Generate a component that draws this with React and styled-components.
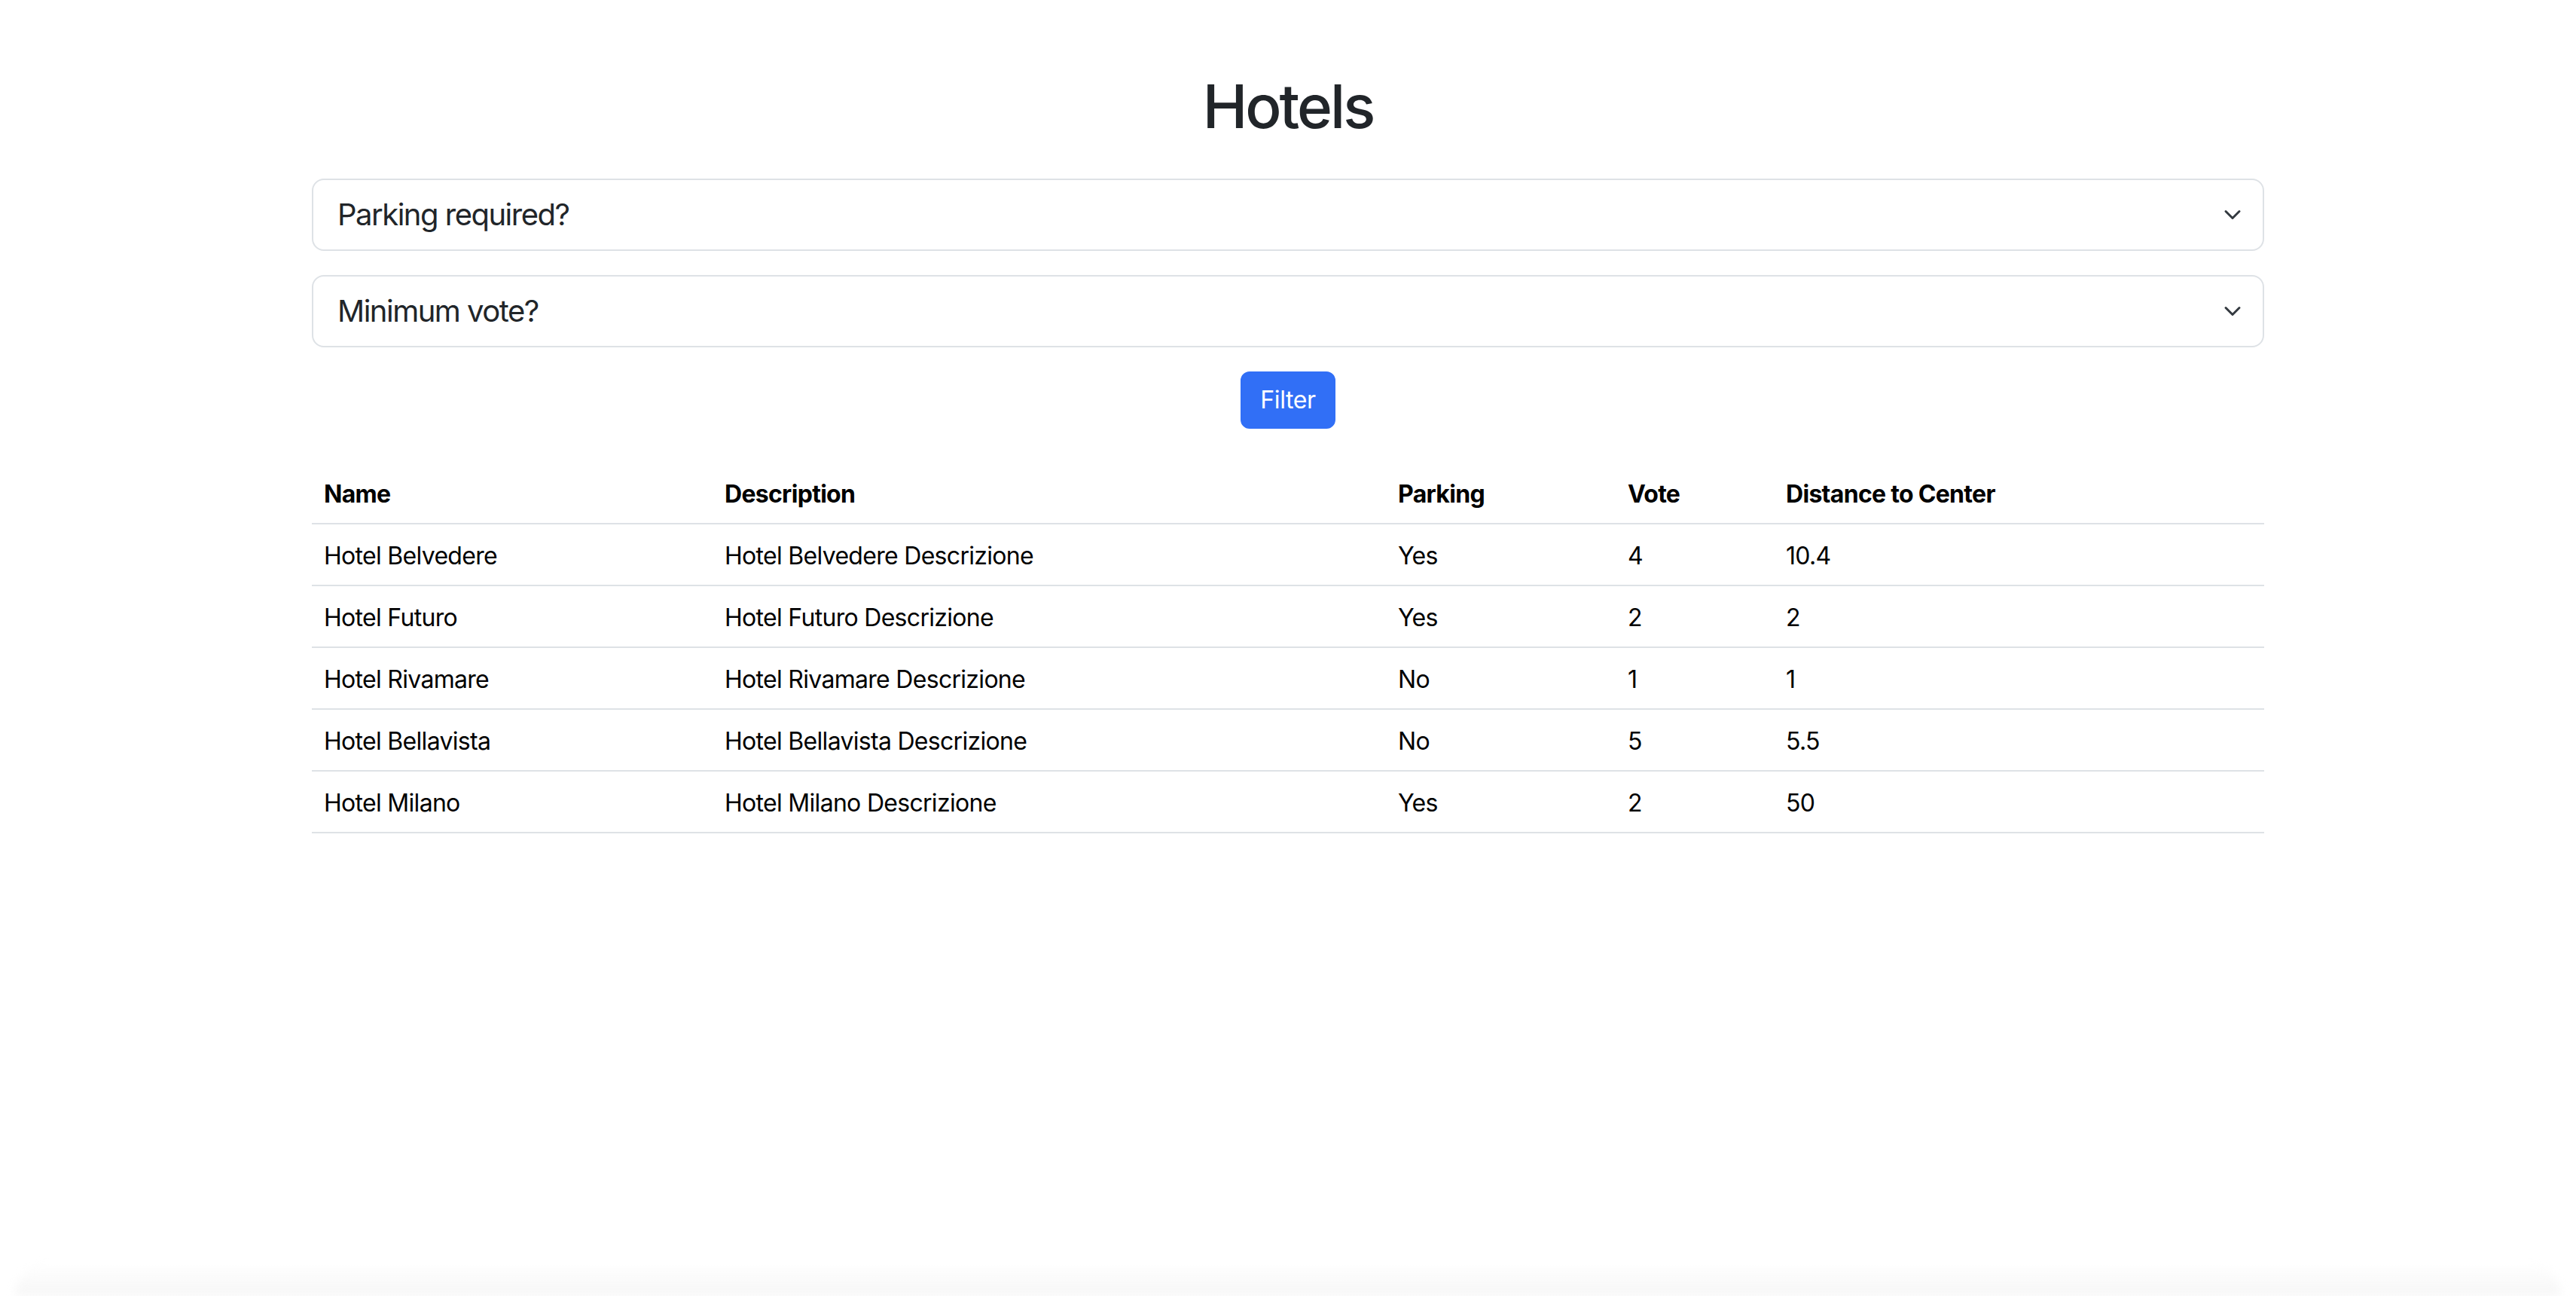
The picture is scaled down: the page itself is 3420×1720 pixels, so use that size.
import React from "react";
import styled, { createGlobalStyle } from "styled-components";

const GlobalStyle = createGlobalStyle`
  html, body { margin: 0; padding: 0; background: #ffffff; }
  body {
    font-family: Inter, "Noto Sans", "Liberation Sans", sans-serif;
    color: #212529;
    -webkit-font-smoothing: antialiased;
  }
  * { box-sizing: border-box; }
`;

const Page = styled.div`
  min-height: 1720px;
  display: flex;
  flex-direction: column;
`;

const Container = styled.main`
  width: 2640px;
  margin: 0 auto;
  padding: 0 24px;
`;

const Title = styled.h1`
  margin: 93px 0 48px;
  font-size: 80px;
  font-weight: 500;
  line-height: 96px;
  text-align: center;
  color: #212529;
  letter-spacing: -3px;
`;

const SelectBox = styled.div`
  display: flex;
  align-items: center;
  justify-content: space-between;
  height: 96px;
  margin-bottom: 32px;
  padding: 0 24px 0 32px;
  border: 2px solid #dee2e6;
  border-radius: 16px;
  background: #fff;
  font-size: 40px;
  line-height: 60px;
  color: #212529;
  letter-spacing: -1.5px;
`;

const Chevron = styled.svg`
  width: 32px;
  height: 24px;
  flex: none;
`;

const ButtonRow = styled.div`
  display: flex;
  justify-content: center;
`;

const Button = styled.button`
  font-family: inherit;
  font-size: 32px;
  line-height: 48px;
  padding: 12px 24px;
  border: 2px solid #316ff6;
  border-radius: 12px;
  background: #316ff6;
  color: #fff;
  letter-spacing: -0.4px;
  cursor: pointer;
`;

const Table = styled.table`
  width: 100%;
  margin-top: 45px;
  border-collapse: collapse;
  table-layout: fixed;
  color: #000;
  font-size: 32px;
  line-height: 48px;
  letter-spacing: -0.7px;
`;

const Th = styled.th`
  text-align: left;
  font-weight: 700;
  padding: 18px 16px 14px;
  border-bottom: 2px solid #dee2e6;
  width: ${(p) => p.$w}px;
`;

const Td = styled.td`
  padding: 18px 16px 14px;
  border-bottom: 2px solid #dee2e6;
`;

const Spacer = styled.div`
  flex: 1;
`;

const BottomShade = styled.div`
  height: 44px;
  margin: 0 20px;
  border-radius: 60px 60px 0 0;
  background: linear-gradient(to bottom, rgba(248, 248, 248, 0), #f6f6f6);
  filter: blur(6px);
`;

const columns = [
  { key: "name", label: "Name", w: 532 },
  { key: "desc", label: "Description", w: 894 },
  { key: "parking", label: "Parking", w: 305 },
  { key: "vote", label: "Vote", w: 210 },
  { key: "dist", label: "Distance to Center", w: 651 },
];

const hotels = [
  { name: "Hotel Belvedere", desc: "Hotel Belvedere Descrizione", parking: "Yes", vote: "4", dist: "10.4" },
  { name: "Hotel Futuro", desc: "Hotel Futuro Descrizione", parking: "Yes", vote: "2", dist: "2" },
  { name: "Hotel Rivamare", desc: "Hotel Rivamare Descrizione", parking: "No", vote: "1", dist: "1" },
  { name: "Hotel Bellavista", desc: "Hotel Bellavista Descrizione", parking: "No", vote: "5", dist: "5.5" },
  { name: "Hotel Milano", desc: "Hotel Milano Descrizione", parking: "Yes", vote: "2", dist: "50" },
];

const Select = ({ label }) => (
  <SelectBox role="combobox">
    <span>{label}</span>
    <Chevron viewBox="0 0 16 16" aria-hidden="true">
      <path
        d="M2 5l6 6 6-6"
        fill="none"
        stroke="#343a40"
        strokeWidth="2"
        strokeLinecap="round"
        strokeLinejoin="round"
      />
    </Chevron>
  </SelectBox>
);

export default function App() {
  return (
    <Page>
      <GlobalStyle />
      <Container>
        <Title>Hotels</Title>
        <Select label="Parking required?" />
        <Select label="Minimum vote?" />
        <ButtonRow>
          <Button type="button">Filter</Button>
        </ButtonRow>
        <Table>
          <thead>
            <tr>
              {columns.map((c) => (
                <Th key={c.key} $w={c.w}>
                  {c.label}
                </Th>
              ))}
            </tr>
          </thead>
          <tbody>
            {hotels.map((h) => (
              <tr key={h.name}>
                {columns.map((c) => (
                  <Td key={c.key}>{h[c.key]}</Td>
                ))}
              </tr>
            ))}
          </tbody>
        </Table>
      </Container>
      <Spacer />
      <BottomShade />
    </Page>
  );
}
